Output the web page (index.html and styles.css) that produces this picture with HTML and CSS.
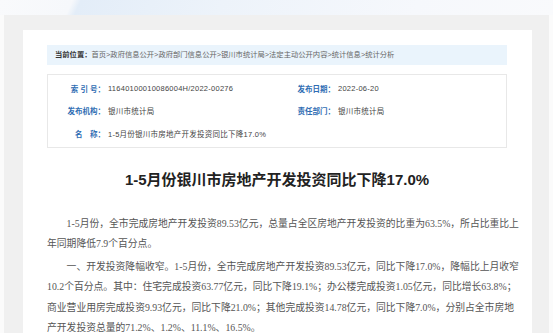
FILE: index.html
```html
<!DOCTYPE html>
<html lang="zh-CN">
<head>
  <meta charset="UTF-8" />
  <title>1-5月份银川市房地产开发投资同比下降17.0%</title>
  <meta name="viewport" content="width=device-width, initial-scale=1" />
  <link rel="stylesheet" href="styles.css">
</head>

<body>
  <!-- 顶部背景条 -->
  <div class="top-band"></div>

  <div class="page">
    <div class="card">

      <!-- 当前位置 -->
      <div class="crumb">
        <b>当前位置：</b>首页&gt;政府信息公开&gt;政府部门信息公开&gt;银川市统计局&gt;法定主动公开内容&gt;统计信息&gt;统计分析
      </div>

      <!-- 信息表 -->
      <div class="meta">
        <div class="meta-label">索 引 号：</div>
        <div class="meta-value">11640100010086004H/2022-00276</div>
        <div class="meta-label">发布日期：</div>
        <div class="meta-value">2022-06-20</div>

        <div class="meta-label">发布机构：</div>
        <div class="meta-value">银川市统计局</div>
        <div class="meta-label">责任部门：</div>
        <div class="meta-value">银川市统计局</div>

        <div class="meta-label">名&ensp;&ensp;称：</div>
        <div class="meta-value wide">1-5月份银川市房地产开发投资同比下降17.0%</div>
      </div>

      <h1 class="title">1-5月份银川市房地产开发投资同比下降17.0%</h1>

      <div class="article">
        <p>1-5月份，全市完成房地产开发投资89.53亿元，总量占全区房地产开发投资的比重为63.5%，所占比重比上<br>年同期降低7.9个百分点。</p>
        <p>一、开发投资降幅收窄。1-5月份，全市完成房地产开发投资89.53亿元，同比下降17.0%，降幅比上月收窄<br>10.2个百分点。其中：住宅完成投资63.77亿元，同比下降19.1%；办公楼完成投资1.05亿元，同比增长63.8%；<br>商业营业用房完成投资9.93亿元，同比下降21.0%；其他完成投资14.78亿元，同比下降7.0%，分别占全市房地<br>产开发投资总量的71.2%、1.2%、11.1%、16.5%。</p>
      </div>

    </div>
  </div>
</body>
</html>
```

FILE: styles.css
```css
body {
  margin: 0;
  background-color: #fbfbfb;
  font-family: "Liberation Sans", "Noto Sans CJK SC", sans-serif;
  color: #333;
}

.top-band {
  height: 15px;
  background: linear-gradient(115deg, #f9fafc 0, #f6f8fb 13%, #e3edf8 14.5%, #edf3fa 40%, #f6f8fc 75%, #f9fafc 100%);
}

.page {
  margin: 0 4px;
  padding: 15px 17px 0 19px;
  background-color: #f0f0f0;
}

.card {
  background-color: #fff;
  padding: 15px 25px 20px 24px;
}

/* 当前位置 */
.crumb {
  height: 20px;
  line-height: 20px;
  padding-left: 8px;
  background-color: #eaf4fc;
  font-size: 7.3px;
  color: #666;
  white-space: nowrap;
}
.crumb b {
  color: #333;
}

/* 信息表 */
.meta {
  margin-top: 9px;
  border: 1px solid #e8e8e8;
  padding: 2px 0;
  display: grid;
  grid-template-columns: 57px 185px 45px 1fr;
  grid-auto-rows: 22.5px;
  align-items: center;
  font-size: 7.5px;
}

.meta-label {
  text-align: right;
  color: #2f6db3;
  font-weight: 700;
  white-space: nowrap;
}

.meta-value {
  padding-left: 3px;
  color: #444;
  letter-spacing: 0.25px;
  white-space: nowrap;
}
.meta-value.wide {
  grid-column: 2 / 5;
}

/* 标题 */
.title {
  margin: 22px 0 0;
  font-size: 15px;
  line-height: 20px;
  font-weight: 700;
  text-align: center;
  color: #222;
}

/* 正文 */
.article {
  margin-top: 24px;
  font-family: "Liberation Serif", "Noto Sans CJK SC", serif;
  font-size: 9.8px;
  line-height: 20.5px;
  color: #555;
}

.article p {
  margin: 0 0 2px;
  text-indent: 2em;
  white-space: nowrap;
}
```
